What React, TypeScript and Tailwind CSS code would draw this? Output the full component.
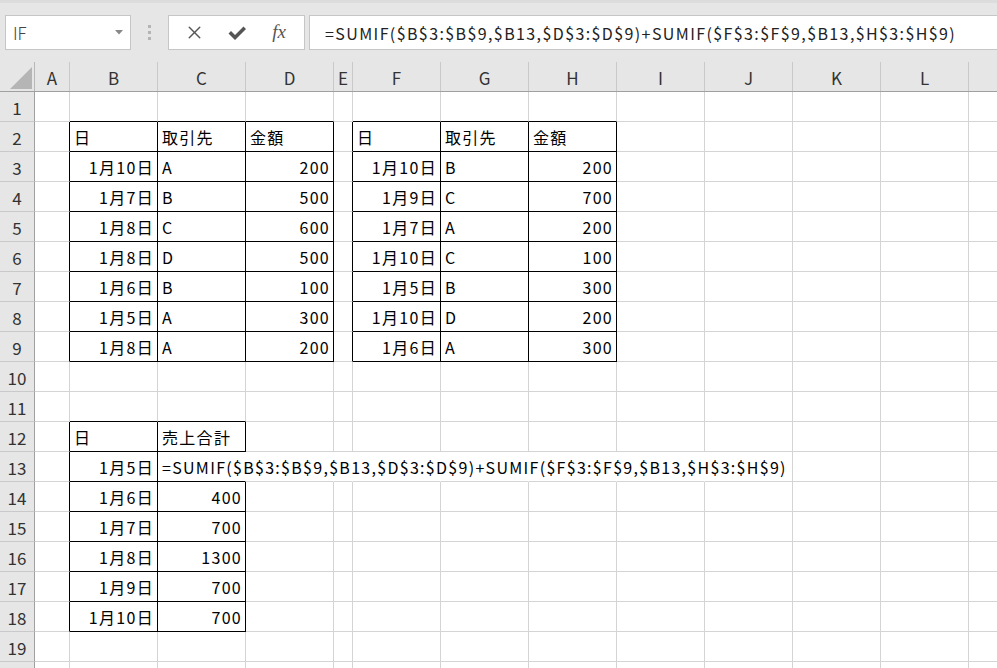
import { X } from 'lucide-react';

type Align = 'left' | 'right';
type Cell = { v: string; a: Align };

// column widths in px, index 0 = A
const COLS = ['A', 'B', 'C', 'D', 'E', 'F', 'G', 'H', 'I', 'J', 'K', 'L', 'M'];
const WIDTHS = [35, 88, 88, 88, 19, 88, 88, 88, 88, 88, 88, 88, 88];
const ROWS = Array.from({ length: 20 }, (_, i) => i + 1);

const FORMULA = '=SUMIF($B$3:$B$9,$B13,$D$3:$D$9)+SUMIF($F$3:$F$9,$B13,$H$3:$H$9)';

// bordered ranges: [rowFrom, colFrom, rowTo, colTo]
const TABLES: [number, number, number, number][] = [
  [2, 1, 9, 3],
  [2, 5, 9, 7],
  [12, 1, 18, 2],
];

function inTable(r: number, c: number) {
  return TABLES.some(([r1, c1, r2, c2]) => r >= r1 && r <= r2 && c >= c1 && c <= c2);
}

const L = (v: string): Cell => ({ v, a: 'left' });
const R = (v: string): Cell => ({ v, a: 'right' });

function buildData() {
  const d: Record<string, Cell> = {};
  const put = (r: number, c: number, cell: Cell) => {
    d[`${r}:${c}`] = cell;
  };
  put(2, 1, L('日'));
  put(2, 2, L('取引先'));
  put(2, 3, L('金額'));
  put(2, 5, L('日'));
  put(2, 6, L('取引先'));
  put(2, 7, L('金額'));

  const left: [string, string, string][] = [
    ['1月10日', 'A', '200'],
    ['1月7日', 'B', '500'],
    ['1月8日', 'C', '600'],
    ['1月8日', 'D', '500'],
    ['1月6日', 'B', '100'],
    ['1月5日', 'A', '300'],
    ['1月8日', 'A', '200'],
  ];
  const right: [string, string, string][] = [
    ['1月10日', 'B', '200'],
    ['1月9日', 'C', '700'],
    ['1月7日', 'A', '200'],
    ['1月10日', 'C', '100'],
    ['1月5日', 'B', '300'],
    ['1月10日', 'D', '200'],
    ['1月6日', 'A', '300'],
  ];
  left.forEach(([day, who, amt], i) => {
    put(3 + i, 1, R(day));
    put(3 + i, 2, L(who));
    put(3 + i, 3, R(amt));
  });
  right.forEach(([day, who, amt], i) => {
    put(3 + i, 5, R(day));
    put(3 + i, 6, L(who));
    put(3 + i, 7, R(amt));
  });

  put(12, 1, L('日'));
  put(12, 2, L('売上合計'));
  const totals: [string, string][] = [
    ['1月5日', FORMULA],
    ['1月6日', '400'],
    ['1月7日', '700'],
    ['1月8日', '1300'],
    ['1月9日', '700'],
    ['1月10日', '700'],
  ];
  totals.forEach(([day, sum], i) => {
    put(13 + i, 1, R(day));
    put(13 + i, 2, i === 0 ? L(sum) : R(sum));
  });
  return d;
}

const DATA = buildData();

// the formula in C13 spills over D13..I13, so those gridlines are not drawn
function spills(r: number, c: number) {
  return r === 13 && c >= 2 && c <= 8;
}

const CELL_FONT = { fontFamily: '"Noto Sans CJK JP", "Noto Sans", sans-serif' };

export default function App() {
  return (
    <div className="h-[668px] w-[997px] overflow-hidden bg-white text-black" style={CELL_FONT}>
      <FormulaBar />
      <ColumnHeaders />
      {ROWS.map((r) => (
        <SheetRow key={r} row={r} />
      ))}
    </div>
  );
}

function FormulaBar() {
  return (
    <div className="flex h-[62px] items-start border-t-[3px] border-[#dcdcdc] bg-[#e6e6e6] pt-[12px]">
      <div className="ml-[5px] flex h-[35px] w-[126px] items-center justify-between border border-[#c6c6c6] bg-white pl-[7px] pr-[7px]">
        <span className="text-[17px] font-light text-[#444]">IF</span>
        <svg width="8" height="5" viewBox="0 0 8 5">
          <path d="M0 0h8L4 4.5z" fill="#888" />
        </svg>
      </div>
      <div className="flex h-[35px] w-[37px] flex-col items-center justify-center gap-[3px]">
        <span className="h-[3px] w-[3px] bg-[#b4b4b4]" />
        <span className="h-[3px] w-[3px] bg-[#b4b4b4]" />
        <span className="h-[3px] w-[3px] bg-[#b4b4b4]" />
      </div>
      <div className="flex h-[35px] w-[137px] items-center border border-[#c6c6c6] bg-white">
        <div className="flex w-[44px] justify-center pl-[6px]">
          <X size={21} strokeWidth={1.6} color="#555" />
        </div>
        <div className="flex w-[44px] justify-center pl-[4px]">
          <svg width="20" height="16" viewBox="0 0 20 16">
            <path d="M1.5 8.5 4 6l4 4L16.5 1.5 19 4 8 15z" fill="#555" />
          </svg>
        </div>
        <div className="flex w-[44px] justify-center">
          <span
            className="text-[19px] italic text-[#555]"
            style={{ fontFamily: '"Liberation Serif", "DejaVu Serif", serif' }}
          >
            fx
          </span>
        </div>
      </div>
      <div className="ml-[4px] flex h-[35px] flex-1 items-center border border-r-0 border-[#c6c6c6] bg-white pl-[15px]">
        <span className="whitespace-nowrap text-[16px] tracking-[1.4px] text-[#222]">{FORMULA}</span>
      </div>
    </div>
  );
}

function ColumnHeaders() {
  return (
    <div className="flex h-[30px] border-b border-[#a0a0a0] bg-[#e6e6e6]">
      <div className="flex w-[35px] shrink-0 items-end justify-end border-r border-[#b8b8b8] pb-[2px] pr-[2px]">
        <svg width="22" height="22" viewBox="0 0 22 22">
          <path d="M22 0V22H0z" fill="#b5b5b5" />
        </svg>
      </div>
      {COLS.map((c, i) => (
        <div
          key={c}
          className="flex shrink-0 items-center justify-center border-r border-[#c9c9c9] pt-[2px] text-[17px] text-[#333]"
          style={{ width: WIDTHS[i] }}
        >
          {/* M sits past the window edge */}
          {c === 'M' ? '' : c}
        </div>
      ))}
    </div>
  );
}

function SheetRow({ row }: { row: number }) {
  return (
    <div className="flex h-[30px]">
      <div className="flex w-[35px] shrink-0 items-center justify-center border-b border-r border-b-[#c9c9c9] border-r-[#a0a0a0] bg-[#e6e6e6] pt-[2px] text-[17px] text-[#333]">
        {row < 20 ? row : ''}
      </div>
      {COLS.map((_, c) => {
        const cell = DATA[`${row}:${c}`];
        const rightBlack = inTable(row, c) || inTable(row, c + 1);
        const bottomBlack = inTable(row, c) || inTable(row + 1, c);
        const rightColor = spills(row, c) ? 'transparent' : rightBlack ? '#000' : '#d4d4d4';
        return (
          <div
            key={c}
            className={
              'flex shrink-0 items-center border-b border-r pt-[1px] text-[16px] tracking-[1.3px] ' +
              (cell?.a === 'right' ? 'justify-end pr-[3px] pl-[4px]' : 'justify-start pl-[4px]')
            }
            style={{
              width: WIDTHS[c],
              borderRightColor: rightColor,
              borderBottomColor: bottomBlack ? '#000' : '#d4d4d4',
            }}
          >
            {cell && <span className="whitespace-nowrap">{cell.v}</span>}
          </div>
        );
      })}
    </div>
  );
}
